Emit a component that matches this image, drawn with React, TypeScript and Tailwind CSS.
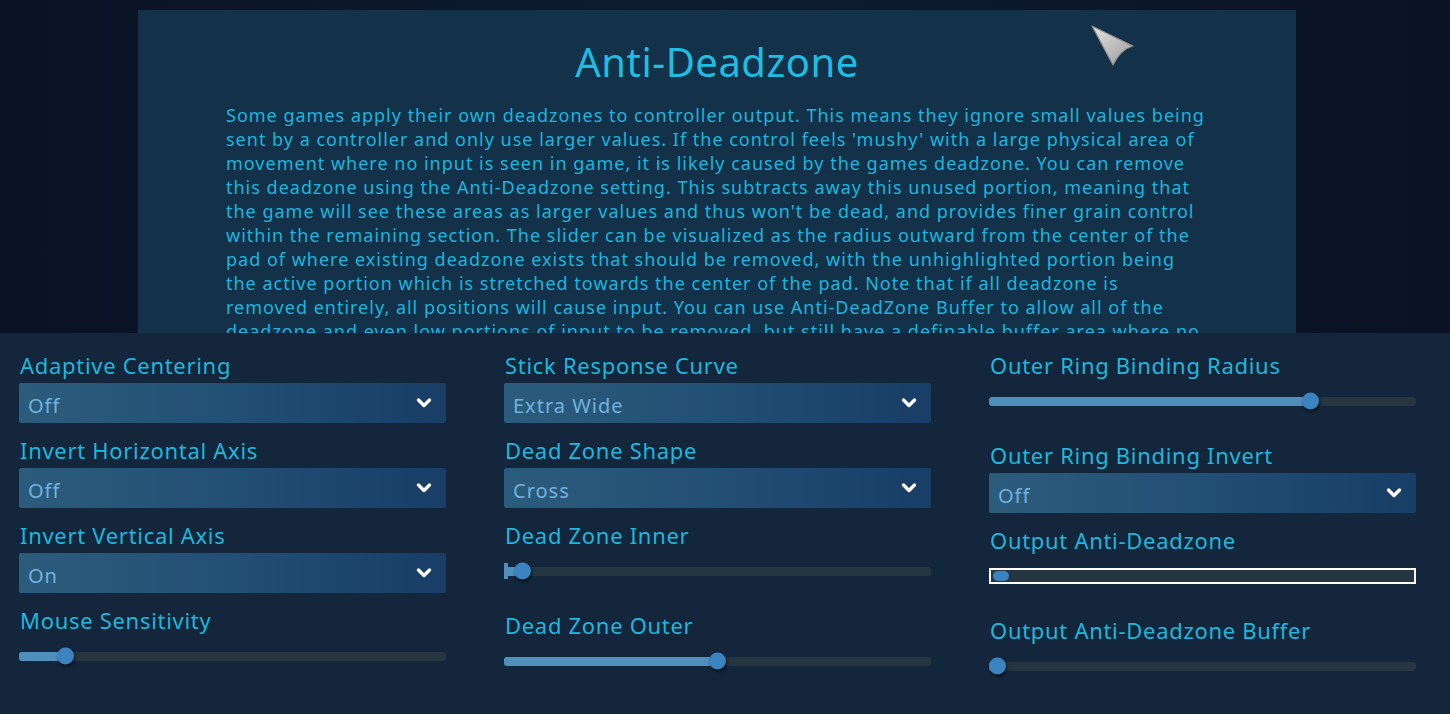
import React from "react";

const FONT = { fontFamily: '"Noto Sans", "Open Sans", sans-serif' };

const LINES = [
  "Some games apply their own deadzones to controller output. This means they ignore small values being",
  "sent by a controller and only use larger values. If the control feels 'mushy' with a large physical area of",
  "movement where no input is seen in game, it is likely caused by the games deadzone. You can remove",
  "this deadzone using the Anti-Deadzone setting. This subtracts away this unused portion, meaning that",
  "the game will see these areas as larger values and thus won't be dead, and provides finer grain control",
  "within the remaining section. The slider can be visualized as the radius outward from the center of the",
  "pad of where existing deadzone exists that should be removed, with the unhighlighted portion being",
  "the active portion which is stretched towards the center of the pad. Note that if all deadzone is",
  "removed entirely, all positions will cause input. You can use Anti-DeadZone Buffer to allow all of the",
  "deadzone and even low portions of input to be removed, but still have a definable buffer area where no",
];

function Chevron() {
  return (
    <svg width="16" height="12" viewBox="0 0 16 12">
      <path d="M2.5 3 L8 8.5 L13.5 3" fill="none" stroke="#ffffff" strokeWidth="3.4" strokeLinecap="round" strokeLinejoin="round" />
    </svg>
  );
}

function Label({ text }: { text: string }) {
  return (
    <div className="h-[28px] leading-[28px] text-[22px] tracking-[0.7px] pl-[1px] text-[#1cb8de] whitespace-nowrap">
      {text}
    </div>
  );
}

function Dropdown({ label, value }: { label: string; value: string }) {
  return (
    <div className="mb-[13px]">
      <Label text={label} />
      <div className="mt-[4px] h-[40px] flex items-center justify-between pl-[9px] pr-[14px] rounded-[2px] bg-linear-to-r from-[#2c5c7c] via-[#224f74] to-[#183d66]">
        <span className="text-[20px] tracking-[1px] pt-[5px] text-[#72b2de] leading-none">{value}</span>
        <Chevron />
      </div>
    </div>
  );
}

function Slider({ label, pos, marker, focused }: { label: string; pos: number; marker?: boolean; focused?: boolean }) {
  return (
    <div className="mb-[18px]">
      <Label text={label} />
      <div className="h-[44px] flex items-center">
        {focused ? (
          <div className="relative w-full h-[16px] border-2 border-white bg-[#253641]">
            <div className="absolute left-[2px] top-[1px] w-[16px] h-[10px] rounded-full bg-[#3a82bd]" />
          </div>
        ) : (
          <div className="relative w-full h-[9px] rounded-[3px] bg-[#253640]">
            <div className="absolute left-0 top-0 h-full rounded-l-[3px] bg-[#4f8fbc]" style={{ width: pos }} />
            {marker && <div className="absolute left-0 top-[-4px] w-[4px] h-[16px] bg-[#4f8fbc]" />}
            <div
              className="absolute top-1/2 w-[17px] h-[17px] rounded-full bg-[#3b84bf] shadow-[1px_2px_3px_rgba(0,0,0,0.6)]"
              style={{ left: pos - 8.5, transform: "translateY(-50%)" }}
            />
          </div>
        )}
      </div>
    </div>
  );
}

export default function App() {
  return (
    <div className="w-[1450px] h-[714px] relative overflow-hidden flex flex-col bg-[#0b1527]" style={FONT}>
      <div className="h-[333px] flex pl-[138px] pt-[10px] bg-linear-to-r from-[#0a1223] via-[#0e1c31] to-[#0a1223] shrink-0">
        <div className="w-[1158px] h-full bg-[#13324a] overflow-hidden flex flex-col items-center">
          <div className="mt-[28px] text-[40px] tracking-[0.5px] leading-[48px] text-[#1ebde2] h-[48px] whitespace-nowrap">
            Anti-Deadzone
          </div>
          <div className="mt-[17px] self-start pl-[88px] text-[18px] tracking-[1px] leading-[24px] text-[#1ab6de]">
            {LINES.map((l, i) => (
              <div key={i} className="whitespace-nowrap">{l}</div>
            ))}
          </div>
        </div>
      </div>
      <div className="flex-1 bg-[#14263b] flex gap-[58px] pl-[19px] pt-[18px]">
        <div className="w-[427px] flex flex-col">
          <Dropdown label="Adaptive Centering" value="Off" />
          <Dropdown label="Invert Horizontal Axis" value="Off" />
          <Dropdown label="Invert Vertical Axis" value="On" />
          <Slider label="Mouse Sensitivity" pos={46} />
        </div>
        <div className="w-[427px] flex flex-col">
          <Dropdown label="Stick Response Curve" value="Extra Wide" />
          <Dropdown label="Dead Zone Shape" value="Cross" />
          <Slider label="Dead Zone Inner" pos={18} marker />
          <Slider label="Dead Zone Outer" pos={213} />
        </div>
        <div className="w-[427px] flex flex-col">
          <Slider label="Outer Ring Binding Radius" pos={321} />
          <Dropdown label="Outer Ring Binding Invert" value="Off" />
          <Slider label="Output Anti-Deadzone" pos={10} focused />
          <Slider label="Output Anti-Deadzone Buffer" pos={8} />
        </div>
      </div>
      <svg className="absolute left-[1088px] top-[23px]" width="50" height="50" viewBox="0 0 50 50">
        <defs>
          <linearGradient id="cg" x1="0" y1="0" x2="1" y2="1">
            <stop offset="0" stopColor="#e4e4e4" />
            <stop offset="1" stopColor="#9a9a9a" />
          </linearGradient>
        </defs>
        <path d="M4 3 L45 23 Q33 26 25 42 L4 3 Z" fill="url(#cg)" stroke="#8a8a8a" strokeWidth="1.2" strokeLinejoin="round" />
      </svg>
    </div>
  );
}
